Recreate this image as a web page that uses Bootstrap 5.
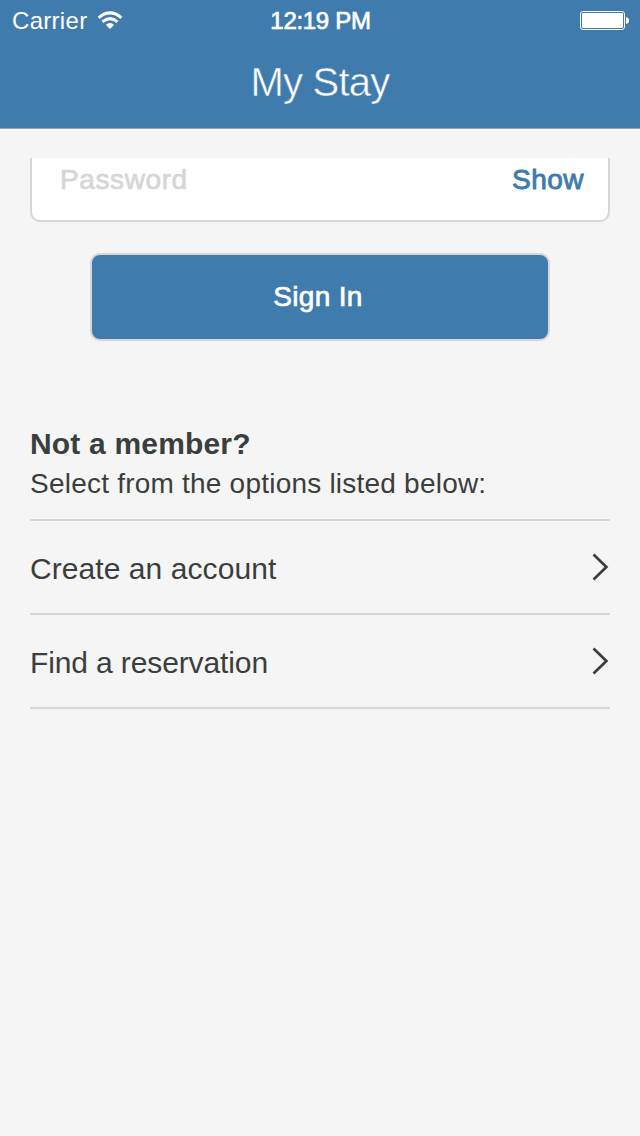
<!DOCTYPE html>
<html lang="en">
<head>
<meta charset="utf-8">
<meta name="viewport" content="width=device-width, initial-scale=1">
<title>My Stay</title>
<link href="https://cdn.jsdelivr.net/npm/bootstrap@5.3.0/dist/css/bootstrap.min.css" rel="stylesheet">
<style>
  :root { --brand: #407bad; --ink: #3a3e3d; --line: #d6d6d6; }
  body { font-family: "Liberation Sans", Arial, sans-serif; background: #f5f5f5; color: var(--ink); min-height: 1136px; overflow: hidden; }
  .app-header { background: var(--brand); height: 129px; border-bottom: 1px solid #a3a3a6; }
  .status-bar { height: 40px; font-size: 24px; line-height: 40px; padding: 1px 11px 0 12px; display: grid; grid-template-columns: 1fr auto 1fr; }
  .medium { -webkit-text-stroke: .7px currentColor; }
  .carrier { letter-spacing: .3px; }
  .clock { letter-spacing: -.3px; }
  .page-title { font-size: 40px; line-height: 84px; font-weight: 400; -webkit-text-stroke: .5px var(--brand); letter-spacing: -.8px; }
  .form-area { padding: 29px 30px 0; }
  .password-row { height: 64px; border: 2px solid var(--line); border-top: 0; border-radius: 0 0 10px 10px; padding: 0 24px 0 28px; font-size: 28px; line-height: 44px; }
  .password-input { color: var(--line); font-size: 28px; line-height: 44px; background: none; width: 300px; letter-spacing: .6px; }
  .password-input::placeholder { color: var(--line); opacity: 1; }
  .show-link { color: var(--brand); -webkit-text-stroke: .9px currentColor; letter-spacing: .5px; }
  .sign-in { width: 460px; height: 88px; margin-top: 31px; background: var(--brand); border: 2px solid var(--line); border-radius: 10px; font-size: 28px; line-height: 84px; letter-spacing: .3px; padding: 0 4px 0 0; }
  .options { margin: 83px 30px 0; }
  .options h2 { font-size: 30px; line-height: 40px; font-weight: 700; letter-spacing: .18px; }
  .options p { font-size: 28px; line-height: 40px; height: 55px; letter-spacing: .22px; }
  .option-link { height: 94px; border-top: 2px solid var(--line); font-size: 30px; line-height: 96px; color: var(--ink); letter-spacing: .07px; }
  .option-link:last-child { height: 96px; border-bottom: 2px solid var(--line); letter-spacing: -.12px; }
  .option-link svg { margin-top: 32px; }
</style>
</head>
<body>
<header class="app-header text-white">
  <div class="status-bar">
    <div class="d-flex">
      <span class="carrier">Carrier</span>
      <svg class="ms-2" width="30" height="40" viewBox="0 0 30 40" fill="none" stroke="#fff" stroke-width="3" aria-label="Wi-Fi">
        <path d="M3.6 16.8Q15 7 26.4 16.8M7.4 20.8Q15 14.4 22.6 20.8"/><path fill="#fff" stroke="none" d="M10.8 23.7Q15 20.3 19.2 23.7L15 28Z"/>
      </svg>
    </div>
    <span class="medium clock">12:19 PM</span>
    <svg class="ms-auto" width="50" height="38" viewBox="0 0 50 38" aria-label="Battery">
      <rect x="1.5" y="10.5" width="44" height="18" rx="2.5" fill="none" stroke="#fff"/>
      <rect x="3" y="12" width="41" height="15" rx="1.2" fill="#fff"/>
      <path d="M47 16q3 .5 3 3.5t-3 3.5z" fill="#fff"/>
    </svg>
  </div>
  <h1 class="page-title text-center mb-0">My Stay</h1>
</header>
<main>
  <form class="form-area">
    <div class="password-row bg-white d-flex justify-content-between">
      <input class="password-input medium border-0 p-0 h-auto align-self-start" type="password" placeholder="Password" aria-label="Password">
      <a class="show-link text-decoration-none" href="#">Show</a>
    </div>
    <button type="button" class="btn sign-in medium text-white d-block mx-auto">Sign In</button>
  </form>
  <section class="options">
    <h2 class="mb-0"><span>Not a member?</span></h2>
    <p class="mb-0"><span>Select from the options listed below:</span></p>
    <nav>
      <a class="option-link d-flex justify-content-between text-decoration-none" href="#"><span>Create an account</span>
        <svg width="18" height="28" viewBox="0 0 18 28" fill="none" stroke="currentColor" stroke-width="2.7"><path d="M1.5 1.5L14.4 14 1.5 26.5"/></svg></a>
      <a class="option-link d-flex justify-content-between text-decoration-none" href="#"><span>Find a reservation</span>
        <svg width="18" height="28" viewBox="0 0 18 28" fill="none" stroke="currentColor" stroke-width="2.7"><path d="M1.5 1.5L14.4 14 1.5 26.5"/></svg></a>
    </nav>
  </section>
</main>
<script src="https://cdn.jsdelivr.net/npm/bootstrap@5.3.0/dist/js/bootstrap.bundle.min.js"></script>
</body>
</html>
